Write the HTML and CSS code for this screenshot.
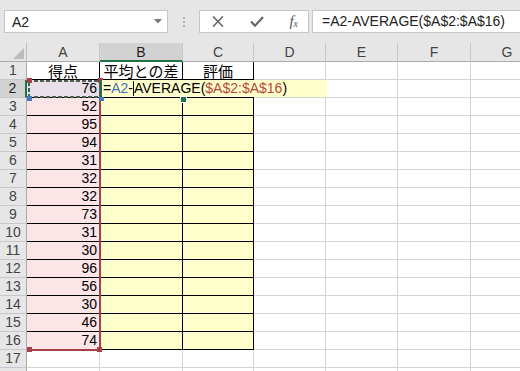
FILE: index.html
```html
<!DOCTYPE html>
<html lang="ja">
  <head>
    <meta charset="UTF-8" />
    <title>Book1 - Excel</title>
    <link rel="stylesheet" href="styles.css">
  </head>
  <body>
    <!-- Formula bar -->
    <div class="toolbar">
      <div class="name-box">
        <span>A2</span>
        <svg class="drop" width="8" height="5" viewBox="0 0 8 5"><path d="M0 0h8L4 4.5z" fill="#777"/></svg>
      </div>
      <div class="grip"><i></i><i></i><i></i></div>
      <div class="fx-buttons">
        <svg width="12" height="11" viewBox="0 0 12 11"><path d="M1 0.5l10 10M11 0.5l-10 10" stroke="#666" stroke-width="1.6" fill="none"/></svg>
        <svg width="14" height="11" viewBox="0 0 14 11"><path d="M1 5.5l4 4.2L13 1" stroke="#666" stroke-width="2.2" fill="none"/></svg>
        <span class="fx"><i>f</i><sub>x</sub></span>
      </div>
      <div class="formula">=A2-AVERAGE($A$2:$A$16)</div>
    </div>

    <!-- Sheet grid -->
    <div class="sheet">
      <div class="corner"></div>
      <div class="ch">A</div><div class="ch sel">B</div><div class="ch">C</div><div class="ch">D</div><div class="ch">E</div><div class="ch">F</div><div class="ch">G</div>

      <div class="rh">1</div><div class="c t hd">得点</div><div class="c t hd">平均との差</div><div class="c t hd">評価</div><div class="c"></div><div class="c"></div><div class="c"></div><div class="c"></div>
      <div class="rh sel">2</div><div class="c t num a2">76</div><div class="c t yel"></div><div class="c t yel"></div><div class="c"></div><div class="c"></div><div class="c"></div><div class="c"></div>
      <div class="rh">3</div><div class="c t num">52</div><div class="c t yel"></div><div class="c t yel"></div><div class="c"></div><div class="c"></div><div class="c"></div><div class="c"></div>
      <div class="rh">4</div><div class="c t num">95</div><div class="c t yel"></div><div class="c t yel"></div><div class="c"></div><div class="c"></div><div class="c"></div><div class="c"></div>
      <div class="rh">5</div><div class="c t num">94</div><div class="c t yel"></div><div class="c t yel"></div><div class="c"></div><div class="c"></div><div class="c"></div><div class="c"></div>
      <div class="rh">6</div><div class="c t num">31</div><div class="c t yel"></div><div class="c t yel"></div><div class="c"></div><div class="c"></div><div class="c"></div><div class="c"></div>
      <div class="rh">7</div><div class="c t num">32</div><div class="c t yel"></div><div class="c t yel"></div><div class="c"></div><div class="c"></div><div class="c"></div><div class="c"></div>
      <div class="rh">8</div><div class="c t num">32</div><div class="c t yel"></div><div class="c t yel"></div><div class="c"></div><div class="c"></div><div class="c"></div><div class="c"></div>
      <div class="rh">9</div><div class="c t num">73</div><div class="c t yel"></div><div class="c t yel"></div><div class="c"></div><div class="c"></div><div class="c"></div><div class="c"></div>
      <div class="rh">10</div><div class="c t num">31</div><div class="c t yel"></div><div class="c t yel"></div><div class="c"></div><div class="c"></div><div class="c"></div><div class="c"></div>
      <div class="rh">11</div><div class="c t num">30</div><div class="c t yel"></div><div class="c t yel"></div><div class="c"></div><div class="c"></div><div class="c"></div><div class="c"></div>
      <div class="rh">12</div><div class="c t num">96</div><div class="c t yel"></div><div class="c t yel"></div><div class="c"></div><div class="c"></div><div class="c"></div><div class="c"></div>
      <div class="rh">13</div><div class="c t num">56</div><div class="c t yel"></div><div class="c t yel"></div><div class="c"></div><div class="c"></div><div class="c"></div><div class="c"></div>
      <div class="rh">14</div><div class="c t num">30</div><div class="c t yel"></div><div class="c t yel"></div><div class="c"></div><div class="c"></div><div class="c"></div><div class="c"></div>
      <div class="rh">15</div><div class="c t num">46</div><div class="c t yel"></div><div class="c t yel"></div><div class="c"></div><div class="c"></div><div class="c"></div><div class="c"></div>
      <div class="rh">16</div><div class="c t num">74</div><div class="c t yel"></div><div class="c t yel"></div><div class="c"></div><div class="c"></div><div class="c"></div><div class="c"></div>
      <div class="rh">17</div><div class="c"></div><div class="c"></div><div class="c"></div><div class="c"></div><div class="c"></div><div class="c"></div><div class="c"></div>
      <div class="rh"></div><div class="c"></div><div class="c"></div><div class="c"></div><div class="c"></div><div class="c"></div><div class="c"></div><div class="c"></div>

      <!-- reference highlights + in-cell editor -->
      <div class="ref-range">
        <span class="knob bl"></span><span class="knob br"></span>
      </div>
      <div class="ref-cell">
        <span class="knob tl"></span><span class="knob tr"></span>
        <span class="knob blue bl"></span><span class="knob blue br"></span>
      </div>
      <div class="editor">=<span class="ref-a">A2</span>-<span class="caret"></span>AVERAGE(<span class="ref-b">$A$2:$A$16</span>)</div>
      <div class="fill-handle"></div>
    </div>
  </body>
</html>
```

FILE: styles.css
```css
body {
  margin: 0;
  width: 520px;
  height: 371px;
  overflow: hidden;
  background: #fff;
  font-family: "Liberation Sans", "Noto Sans CJK JP", sans-serif;
  color: #000;
}

/* formula bar */
.toolbar {
  height: 43px;
  box-sizing: border-box;
  padding-top: 10px;
  background: #e6e6e6;
  display: flex;
  align-items: flex-start;
}

.name-box {
  margin-left: 4px;
  width: 164px;
  height: 23px;
  box-sizing: border-box;
  background: #fff;
  border: 1px solid #c6c6c6;
  display: flex;
  align-items: center;
  justify-content: space-between;
  padding: 0 5px 0 7px;
  font-size: 14px;
  color: #222;
}

.grip {
  width: 31px;
  height: 23px;
  display: flex;
  flex-direction: column;
  align-items: center;
  justify-content: center;
  gap: 2px;
}

.grip i {
  width: 2px;
  height: 2px;
  background: #b4b4b4;
}

.fx-buttons {
  width: 110px;
  height: 23px;
  box-sizing: border-box;
  background: #fff;
  border: 1px solid #c6c6c6;
  display: flex;
  align-items: center;
  justify-content: space-between;
  padding: 0 10px 0 12px;
}

.fx {
  font-family: "Liberation Serif", serif;
  font-size: 15px;
  color: #555;
  line-height: 1;
}

.fx sub {
  font-size: 10px;
  font-style: italic;
  vertical-align: -1px;
}

.formula {
  margin-left: 3px;
  flex: 1;
  height: 23px;
  box-sizing: border-box;
  background: #fff;
  border: 1px solid #c6c6c6;
  border-right: none;
  padding-left: 9px;
  font-size: 14px;
  line-height: 21px;
  color: #222;
  white-space: nowrap;
}

/* sheet */
.sheet {
  position: relative;
  display: grid;
  grid-template-columns: 27px 73px 83px 71px 72px 72px 73px 73px;
  grid-template-rows: 19px repeat(18, 18px);
  height: 328px;
  overflow: hidden;
  font-size: 14px;
}

.corner {
  position: relative;
  background: #e6e6e6;
  border-right: 1px solid #bdbdbd;
  border-bottom: 1px solid #ababab;
}

.corner::after {
  content: "";
  position: absolute;
  right: 2px;
  bottom: 2px;
  border-left: 11px solid transparent;
  border-bottom: 11px solid #bcbcbc;
}

.ch {
  background: #e6e6e6;
  border-right: 1px solid #c8c8c8;
  border-bottom: 1px solid #ababab;
  text-align: center;
  line-height: 19px;
  color: #444;
}

.ch.sel {
  background: #d2d2d2;
  border-bottom: 2px solid #217346;
  color: #222;
}

.rh {
  background: #e6e6e6;
  border-right: 1px solid #ababab;
  border-bottom: 1px solid #c8c8c8;
  text-align: center;
  line-height: 17px;
  color: #444;
}

.rh.sel {
  background: #d2d2d2;
  border-right: 2px solid #217346;
  color: #222;
}

.c {
  border-right: 1px solid #d4d4d4;
  border-bottom: 1px solid #d4d4d4;
  padding: 0 2px;
  line-height: 17px;
  white-space: nowrap;
  overflow: hidden;
}

.t {
  border-right-color: #000;
  border-bottom-color: #000;
}

.hd {
  text-align: center;
  font-family: "Noto Sans CJK JP", sans-serif;
  font-size: 15px;
  line-height: 18px;
  overflow: visible;
}

.num {
  text-align: right;
  background: #fbe5e7;
}

.num.a2 {
  background: #e7e0eb;
}

.yel {
  background: #ffffcc;
}

/* formula reference outlines */
.ref-range {
  position: absolute;
  left: 28px;
  top: 37px;
  width: 73px;
  height: 271px;
  box-sizing: border-box;
  border-right: 2px solid #a8404a;
  border-bottom: 2px solid #a8404a;
}

.ref-cell {
  position: absolute;
  left: 28px;
  top: 37px;
  width: 73px;
  height: 18px;
  background:
    repeating-linear-gradient(90deg, #4d5d4f 0 4px, transparent 4px 6px) top / 100% 2px no-repeat,
    repeating-linear-gradient(90deg, #4d5d4f 0 4px, transparent 4px 6px) bottom / 100% 2px no-repeat,
    repeating-linear-gradient(0deg, #2f6a4c 0 4px, transparent 4px 6px) left / 2px 100% no-repeat,
    repeating-linear-gradient(0deg, #4d5d4f 0 4px, transparent 4px 6px) right / 2px 100% no-repeat;
}

.knob {
  position: absolute;
  width: 5px;
  height: 5px;
  background: #a8404a;
}

.knob.blue {
  background: #4a78c0;
}

.knob.tl { left: -1px; top: -2px; }
.knob.tr { right: -2px; top: -2px; }
.knob.bl { left: -1px; bottom: -3px; }
.knob.br { right: -3px; bottom: -3px; }

.editor {
  position: absolute;
  left: 100px;
  top: 37px;
  width: 227px;
  height: 17px;
  box-sizing: border-box;
  background: #ffffcc;
  border-left: 2px solid #217346;
  padding-left: 1px;
  line-height: 17px;
  white-space: nowrap;
}

.ref-a {
  color: #3f74b8;
}

.ref-b {
  color: #b8463c;
}

.caret {
  display: inline-block;
  width: 1px;
  height: 15px;
  background: #000;
  vertical-align: -3px;
}

.fill-handle {
  position: absolute;
  left: 180px;
  top: 53px;
  width: 5px;
  height: 5px;
  background: #217346;
  border: 1px solid #fff;
}
```
